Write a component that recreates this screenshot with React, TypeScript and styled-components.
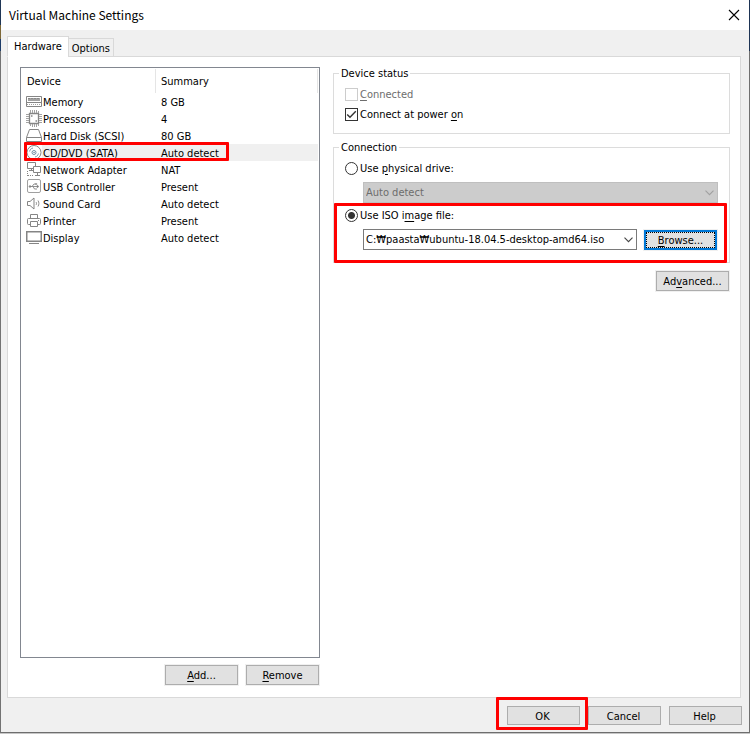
import React from "react";
import styled, { createGlobalStyle } from "styled-components";

const RED = "#ff0000";
const UI_FONT = `"DejaVu Sans Condensed", "DejaVu Sans", "Noto Sans CJK KR", sans-serif`;

const GlobalStyle = createGlobalStyle`
  *, *::before, *::after { box-sizing: border-box; }
  body { margin: 0; background: #c6c6c6; }
  button, select, input { font: inherit; color: inherit; }
`;

const Screen = styled.div`
  display: grid;
  grid-template-columns: 1px 1fr 1px;
  min-height: 100vh;
  padding-bottom: 1px;
  font: 11px/17px ${UI_FONT};
  font-stretch: condensed;
  color: #000;
`;

const LeftEdge = styled.div`
  background: linear-gradient(#1f3656 0 25px, #7d6837 25px 39px, #1d3c68 39px 51px, #737373 51px);
`;

const RightEdge = styled.div`
  background: linear-gradient(#1d3354 0 51px, #707070 51px);
`;

const Dialog = styled.div`
  display: flex;
  flex-direction: column;
  background: #f0f0f0;
  border-bottom: 1px solid #6e6e6e;
`;

const TitleBar = styled.header`
  display: flex;
  align-items: center;
  justify-content: space-between;
  height: 30px;
  padding: 0 9px 0 8px;
  background: #fff;
`;

const Title = styled.h1`
  margin: 0;
  font: 400 12px/20px "Noto Sans CJK KR", "Noto Sans", sans-serif;
`;

const CloseButton = styled.button`
  display: flex;
  padding: 0;
  border: 0;
  background: none;
`;

const TabStrip = styled.div`
  display: flex;
  align-items: flex-end;
  height: 27px;
  margin: 0 8px -1px 6px;
  z-index: 1;
`;

const Tab = styled.button<{ $active?: boolean }>`
  height: ${(p) => (p.$active ? 21 : 19)}px;
  padding: ${(p) => (p.$active ? "0 6px" : "1px 3px 0")};
  margin-left: ${(p) => (p.$active ? 0 : -1)}px;
  border: 1px solid #d9d9d9;
  border-bottom-color: ${(p) => (p.$active ? "#fff" : "#d9d9d9")};
  background: ${(p) => (p.$active ? "#fff" : "#f0f0f0")};
  white-space: nowrap;
  line-height: 17px;
`;

const Pane = styled.main`
  flex: 1;
  display: grid;
  grid-template-columns: 300px 1fr;
  gap: 13px;
  margin: 0 8px 0 6px;
  padding: 10px 10px 12px 12px;
  border: 1px solid #d9d9d9;
  background: #fff;
`;

const DeviceColumn = styled.section`
  display: flex;
  flex-direction: column;
  gap: 7px;
`;

const ListBox = styled.div`
  flex: 1;
  padding-right: 1px;
  border: 1px solid #828790;
`;

const DeviceTable = styled.table`
  width: 100%;
  table-layout: fixed;
  border-collapse: collapse;
`;

const HeadCell = styled.th<{ $wide?: boolean }>`
  width: ${(p) => (p.$wide ? "auto" : "135px")};
  height: 25px;
  padding: 2px 0 0 ${(p) => (p.$wide ? 5 : 6)}px;
  text-align: left;
  font-weight: 400;
  background: linear-gradient(#e5e5e5, #e5e5e5) right bottom / 1px 24px no-repeat;
`;

const NameCell = styled.td`
  padding: 0;
`;

const NameLine = styled.div`
  position: relative;
  display: flex;
  height: 17px;
  padding-left: 5px;
`;

const DeviceName = styled.span<{ $selected: boolean }>`
  flex: 1;
  padding: 2px 0 0 1px;
  line-height: 15px;
  white-space: nowrap;
  background: ${(p) => (p.$selected ? "#f0f0f0" : "transparent")};
`;

const SummaryCell = styled.td<{ $selected: boolean }>`
  padding: 2px 0 0 5px;
  line-height: 15px;
  background: ${(p) => (p.$selected ? "#f0f0f0" : "transparent")};
`;

const Marker = styled.span<{ $inset: string; $width?: string }>`
  position: absolute;
  inset: ${(p) => p.$inset};
  width: ${(p) => p.$width ?? "auto"};
  border: 3px solid ${RED};
  border-radius: 1px;
  pointer-events: none;
  z-index: 2;
`;

const ButtonRow = styled.div`
  display: flex;
  justify-content: flex-end;
  gap: 8px;
  padding-right: 1px;
`;

const PushButton = styled.button<{ $short?: boolean }>`
  width: 73px;
  height: ${(p) => (p.$short ? 19 : 20)}px;
  padding: ${(p) => (p.$short ? "1px 2px 0 0" : "0")};
  border: 1px solid #adadad;
  background: #e1e1e1;
  box-shadow: 0 0 0 1px #f0f0f0;
  line-height: 17px;
  text-align: center;
`;

const DefaultButton = styled(PushButton)`
  padding-top: 1px;
  border: 2px solid #0078d7;
  outline: 1px dotted #000;
  outline-offset: -3px;
  line-height: 15px;
`;

const Key = styled.span`
  text-decoration: underline;
  text-underline-offset: 2px;
`;

const SettingsColumn = styled.section`
  display: flex;
  flex-direction: column;
  min-width: 0;
`;

const Group = styled.fieldset<{ $roomy?: boolean }>`
  min-width: 0;
  margin: 0 0 7px;
  padding: 4px 11px ${(p) => (p.$roomy ? 12 : 9)}px;
  border: 1px solid #dcdcdc;
`;

const GroupTitle = styled.legend`
  margin-left: -6px;
  padding: 0 2px;
  line-height: 13px;
`;

const Option = styled.label<{ $disabled?: boolean }>`
  display: flex;
  align-items: center;
  gap: 2px;
  height: 20px;
  color: ${(p) => (p.$disabled ? "#6d6d6d" : "#000")};
`;

const CheckBox = styled.input`
  appearance: none;
  width: 13px;
  height: 13px;
  margin: 0;
  border: 1px solid #333;
  background: #fff;
  &:disabled { border-color: #ccc; }
  &:checked {
    background: url("data:image/svg+xml,%3Csvg xmlns='http://www.w3.org/2000/svg' viewBox='0 0 11 11'%3E%3Cpath d='M1.2 5.5 4 8.3 9.8 2.3' fill='none' stroke='%23333' stroke-width='1.4'/%3E%3C/svg%3E");
  }
`;

const Radio = styled.input`
  appearance: none;
  width: 13px;
  height: 13px;
  margin: 0;
  border: 1px solid #333;
  border-radius: 50%;
  background: #fff;
  &:checked { background: radial-gradient(circle, #333 0 3px, #fff 4px); }
`;

const FieldRow = styled.div`
  display: flex;
  align-items: flex-end;
  gap: 7px;
  padding: 4px 0 0 18px;
`;

const SelectWrap = styled.div`
  flex: 1;
  display: grid;
  align-items: center;
  min-width: 0;
  > * { grid-area: 1 / 1; }
  > svg { justify-self: end; margin-right: 4px; pointer-events: none; }
`;

const Select = styled.select`
  appearance: none;
  width: 100%;
  height: 21px;
  padding: 0 18px 0 2px;
  border: 1px solid #7a7a7a;
  border-radius: 0;
  background: #fff;
  line-height: 17px;
  &:disabled {
    border-color: #bfbfbf;
    background: #ccc;
    color: #6d6d6d;
    opacity: 1;
  }
`;

const PhysicalBlock = styled.div`
  padding-bottom: 2px;
`;

const IsoBlock = styled.div`
  position: relative;
  > ${FieldRow} { padding-right: 1px; }
`;

const AdvancedRow = styled(ButtonRow)`
  padding-top: 1px;
`;

const Footer = styled.footer`
  display: flex;
  justify-content: flex-end;
  gap: 8px;
  padding: 8px 7px 7px;
`;

const MarkedItem = styled.div`
  position: relative;
  display: flex;
`;

const Svg = ({ children }: { children: React.ReactNode }) => (
  <svg width="16" height="17" viewBox="0 0 16 17" fill="none" stroke="#858585" aria-hidden="true">
    {children}
  </svg>
);

const icons: Record<string, React.ReactNode> = {
  Memory: (
    <Svg>
      <path d="M.5 3.500h15v10H.5z" fill="#fff" />
      <path d="M2 6.500h12" strokeWidth="3" stroke="#a2a2a2" />
      <path d="M2.500 5.500h1M5.500 5.500h1M8.500 5.500h1M11.500 5.500h1" stroke="#707070" />
      <path d="M.5 9.500h15" />
      <path d="M1 11.500h14" strokeDasharray="1 1" stroke="#a0a0a0" />
    </Svg>
  ),
  Processors: (
    <Svg>
      <path d="M3.500 3.500h9v10h-9z" strokeWidth="1.300" />
      <path d="M4.500 0v3M6.500 0v3M8.500 0v3M10.500 0v3M12.500 1v2M4.500 14v2M6.500 14v3M8.500 14v3M10.500 14v3M12.500 14v2M0 4.500h3M0 6.500h3M0 8.500h3M0 10.500h3M0 12.500h3M13 4.500h3M13 6.500h3M13 8.500h3M13 10.500h3M13 12.500h3" stroke="#a3a3a3" />
      <path d="M5 6h1.500M9.500 11h1.500" strokeWidth="1.500" />
    </Svg>
  ),
  "Hard Disk (SCSI)": (
    <Svg>
      <path d="M3.500 2.500h9l3 8v4H.5v-4z" />
      <path d="M.5 10.500h15" />
    </Svg>
  ),
  "CD/DVD (SATA)": (
    <Svg>
      <circle cx="8" cy="8.500" r="7" />
      <circle cx="8" cy="8.500" r="2" stroke="#7590a5" />
      <path d="M8 8h.1v1H8z" stroke="#7590a5" />
      <path d="M3.600 7.500C4 5.500 5 4.500 7 4M12.400 9.500C12 11.500 11 12.500 9 13" stroke="#7b9ab0" />
    </Svg>
  ),
  "Network Adapter": (
    <Svg>
      <path d="M1.500 1.500h8v6h-8zM3 9.500h4M5.500 7.500v2" />
      <path d="M7.500 5.500h7v6h-7z" fill="#fff" />
      <path d="M11.500 12v2M9 14.500h5" />
      <path d="M1.500 10v5M2 14.500h6" strokeDasharray="1 1" />
    </Svg>
  ),
  "USB Controller": (
    <Svg>
      <rect x="1.500" y="1.500" width="13" height="13" rx="1.500" stroke="#a0a0a0" />
      <path d="M4 8.500h8M6 8.500l2-2.500h2M7 8.500l1.500 2.500H11" strokeWidth=".9" />
      <circle cx="4" cy="8.500" r=".8" fill="#7b7b7b" />
      <path d="m11 7 2 1.500-2 1.500zM9.500 5.500h1.500v1H9.500z" fill="#7b7b7b" strokeWidth=".3" />
    </Svg>
  ),
  "Sound Card": (
    <Svg>
      <path d="M1.500 6.500H4l4-3.500v11l-4-3.500H1.500z" />
      <path d="M10 7c.7 1 .7 2 0 3M12 5.500c1.200 2 1.200 4 0 6" strokeWidth=".9" />
    </Svg>
  ),
  Printer: (
    <Svg>
      <path d="M4.500 6V2.500h7V6M4 12.500H2.500q-1 0-1-1v-4q0-1 1-1h11q1 0 1 1v4q0 1-1 1H12" />
      <path d="M4.500 9.500h7v5h-7zM12 8.500h1" />
    </Svg>
  ),
  Display: (
    <Svg>
      <path d="M.75 2.750h14.500v9.500H.75z" strokeWidth="1.500" />
      <path d="M3 14.500h10" />
    </Svg>
  ),
};

const Chevron = ({ color }: { color: string }) => (
  <svg width="9" height="6" viewBox="0 0 9 6" fill="none" stroke={color} aria-hidden="true">
    <path d="M.5.7 4.500 4.700 8.500.7" strokeWidth="1.100" />
  </svg>
);

const devices = [
  ["Memory", "8 GB"],
  ["Processors", "4"],
  ["Hard Disk (SCSI)", "80 GB"],
  ["CD/DVD (SATA)", "Auto detect"],
  ["Network Adapter", "NAT"],
  ["USB Controller", "Present"],
  ["Sound Card", "Auto detect"],
  ["Printer", "Present"],
  ["Display", "Auto detect"],
];
const SELECTED = "CD/DVD (SATA)";

export default function App() {
  return (
    <>
      <GlobalStyle />
      <Screen>
        <LeftEdge />
        <Dialog role="dialog" aria-labelledby="dialog-title">
          <TitleBar>
            <Title id="dialog-title">Virtual Machine Settings</Title>
            <CloseButton type="button" aria-label="Close">
              <svg width="12" height="12" viewBox="0 0 12 12" stroke="#000" strokeWidth="1.100" aria-hidden="true">
                <path d="m1 1 10 10M11 1 1 11" />
              </svg>
            </CloseButton>
          </TitleBar>

          <TabStrip role="tablist">
            <Tab type="button" role="tab" aria-selected="true" $active>Hardware</Tab>
            <Tab type="button" role="tab" aria-selected="false">Options</Tab>
          </TabStrip>

          <Pane>
            <DeviceColumn>
              <ListBox>
                <DeviceTable>
                  <thead>
                    <tr>
                      <HeadCell scope="col">Device</HeadCell>
                      <HeadCell scope="col" $wide>Summary</HeadCell>
                    </tr>
                  </thead>
                  <tbody>
                    {devices.map(([name, summary]) => (
                      <tr key={name}>
                        <NameCell>
                          <NameLine>
                            {icons[name]}
                            <DeviceName $selected={name === SELECTED}>{name}</DeviceName>
                            {name === SELECTED && <Marker $inset="-2px auto 0 3px" $width="205px" />}
                          </NameLine>
                        </NameCell>
                        <SummaryCell $selected={name === SELECTED}>{summary}</SummaryCell>
                      </tr>
                    ))}
                  </tbody>
                </DeviceTable>
              </ListBox>
              <ButtonRow>
                <PushButton type="button"><Key>A</Key>dd...</PushButton>
                <PushButton type="button"><Key>R</Key>emove</PushButton>
              </ButtonRow>
            </DeviceColumn>

            <SettingsColumn>
              <Group>
                <GroupTitle>Device status</GroupTitle>
                <Option $disabled>
                  <CheckBox type="checkbox" disabled />
                  <span><Key>C</Key>onnected</span>
                </Option>
                <Option>
                  <CheckBox type="checkbox" defaultChecked />
                  <span>Connect at power <Key>o</Key>n</span>
                </Option>
              </Group>

              <Group $roomy>
                <GroupTitle>Connection</GroupTitle>
                <PhysicalBlock>
                  <Option>
                    <Radio type="radio" name="source" />
                    <span>Use <Key>p</Key>hysical drive:</span>
                  </Option>
                  <FieldRow>
                    <SelectWrap>
                      <Select disabled aria-label="Physical drive">
                        <option>Auto detect</option>
                      </Select>
                      <Chevron color="#a0a0a0" />
                    </SelectWrap>
                  </FieldRow>
                </PhysicalBlock>
                <IsoBlock>
                  <Option>
                    <Radio type="radio" name="source" defaultChecked />
                    <span>Use ISO i<Key>m</Key>age file:</span>
                  </Option>
                  <FieldRow>
                    <SelectWrap>
                      <Select aria-label="ISO image file">
                        <option>C:₩paasta₩ubuntu-18.04.5-desktop-amd64.iso</option>
                      </Select>
                      <Chevron color="#444" />
                    </SelectWrap>
                    <DefaultButton type="button"><Key>B</Key>rowse...</DefaultButton>
                  </FieldRow>
                  <Marker $inset="-2px -9px -13px -11px" />
                </IsoBlock>
              </Group>

              <AdvancedRow>
                <PushButton type="button">Ad<Key>v</Key>anced...</PushButton>
              </AdvancedRow>
            </SettingsColumn>
          </Pane>

          <Footer>
            <MarkedItem>
              <PushButton type="button" $short>OK</PushButton>
              <Marker $inset="-9px -8px -5px -11px" />
            </MarkedItem>
            <PushButton type="button" $short>Cancel</PushButton>
            <PushButton type="button" $short>Help</PushButton>
          </Footer>
        </Dialog>
        <RightEdge />
      </Screen>
    </>
  );
}
